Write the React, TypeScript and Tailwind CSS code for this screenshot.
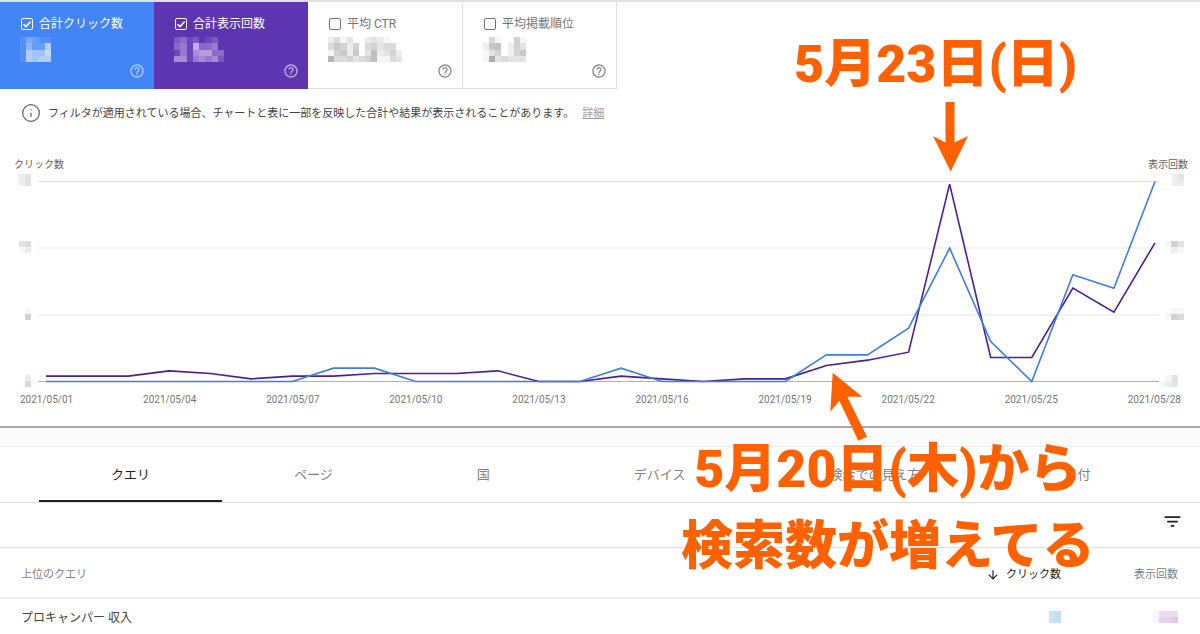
import React, { useState } from 'react';
import { Info } from 'lucide-react';
import { MdArrowDownward, MdFilterList, MdHelpOutline } from 'react-icons/md';

interface MosaicProps {
  rows: string[];
  color: string;
  strength: number;
  label: string;
}

// Pixelated block that hides a number: each digit is the opacity of one cell
const Mosaic: React.FC<MosaicProps> = ({ rows, color, strength, label }) => (
  <svg
    role="img"
    aria-label={label}
    className="block shrink-0"
    width={Math.round(rows[0].length * 6.2)}
    height={Math.round(rows.length * 6.2)}
    viewBox={`0 0 ${rows[0].length} ${rows.length}`}
    preserveAspectRatio="none"
    shapeRendering="crispEdges"
  >
    {rows.map((row, y) =>
      row.split('').map((cell, x) => (
        <rect key={`${x}-${y}`} x={x} y={y} width={1} height={1} fill={color} fillOpacity={Number(cell) * strength} />
      ))
    )}
  </svg>
);

interface Metric {
  id: string;
  title: string;
  card: string;
  box: string;
  help: string;
  color: string;
  strength: number;
  rows: string[];
}

const metrics: Metric[] = [
  {
    id: 'clicks',
    title: '合計クリック数',
    card: 'w-[154px] bg-[#4285f4] text-white',
    box: 'border-white',
    help: 'text-white/60',
    color: '#fff',
    strength: 0.1,
    rows: ['132110', '142260', '165570', '165660'],
  },
  {
    id: 'impressions',
    title: '合計表示回数',
    card: 'w-[154px] bg-[#5e35b1] text-white',
    box: 'border-white',
    help: 'text-white/60',
    color: '#f3e0ff',
    strength: 0.1,
    rows: ['23120120', '34173340', '14156633', '55145452'],
  },
  {
    id: 'ctr',
    title: '平均 CTR',
    card: 'w-[155px] border-r border-b border-[#e0e0e0] text-[#757575]',
    box: 'border-[#757575]',
    help: 'text-[#8a8a8a]',
    color: '#000',
    strength: 0.035,
    rows: ['241300232100', '465250453440', '156260372352', '844534571143'],
  },
  {
    id: 'position',
    title: '平均掲載順位',
    card: 'w-[154px] border-r border-b border-[#e0e0e0] text-[#757575]',
    box: 'border-[#757575]',
    help: 'text-[#8a8a8a]',
    color: '#000',
    strength: 0.035,
    rows: ['0410051', '2670253', '1350256', '1934333'],
  },
];

const clicks = [0, 0, 0, 0, 0, 0, 0, 1, 1, 0, 0, 0, 0, 0, 1, 0, 0, 0, 0, 2, 2, 4, 10, 3, 0, 8, 7, 15];
const impressions = [2, 2, 2, 4, 3, 1, 2, 2, 3, 3, 3, 4, 0, 0, 2, 1, 0, 1, 1, 6, 8, 11, 74, 9, 9, 35, 26, 52];

const dates = [
  '2021/05/01', '2021/05/04', '2021/05/07', '2021/05/10', '2021/05/13',
  '2021/05/16', '2021/05/19', '2021/05/22', '2021/05/25', '2021/05/28',
];

const leftAxis = [['23', '23'], ['34', '12'], ['1', '5'], ['2', '4']];
const rightAxis = [['23', '22'], ['153', '021'], ['011', '154'], ['0130', '1230']];

const tabs = ['クエリ', 'ページ', '国', 'デバイス', '検索での見え方', '日付'];

const toPoints = (values: number[], max: number) =>
  values.map((v, i) => `${8 + (i * 1109) / (values.length - 1)},${200.5 - (v / max) * 200}`).join(' ');

const MetricCard: React.FC<{ metric: Metric }> = ({ metric }) => {
  const [checked, setChecked] = useState(metric.id === 'clicks' || metric.id === 'impressions');

  return (
    <div className={`flex h-[87px] flex-col pt-3 pl-5 pr-[9px] ${metric.card}`}>
      <label htmlFor={metric.id} className="flex h-[18px] items-center gap-1.5 pt-px pl-px text-[12px] leading-4 whitespace-nowrap">
        <span className="grid shrink-0">
          <input
            id={metric.id}
            type="checkbox"
            checked={checked}
            onChange={(e) => setChecked(e.target.checked)}
            className={`col-start-1 row-start-1 size-3 appearance-none rounded-[2px] border ${metric.box}`}
          />
          {checked && (
            <svg className="pointer-events-none col-start-1 row-start-1 size-3" viewBox="0 0 12 12" fill="none" stroke="currentColor" strokeWidth={1.5}>
              <path d="M2.5 6.2 5 8.6 9.6 3.6" />
            </svg>
          )}
        </span>
        {metric.title}
      </label>
      <div className="mt-[5px]">
        <Mosaic rows={metric.rows} color={metric.color} strength={metric.strength} label={metric.title} />
      </div>
      <button aria-label="ヘルプ" className={`mt-px self-end ${metric.help}`}>
        <MdHelpOutline size={16} />
      </button>
    </div>
  );
};

const Chart: React.FC = () => (
  <div>
    <div className="flex justify-between pl-[14px] pr-3 text-[10px] leading-4 text-[#616161]">
      <span>クリック数</span>
      <span>表示回数</span>
    </div>
    <div className="mt-px flex h-[213px]">
      <div className="flex w-[38px] flex-col items-end justify-between pr-[7px]">
        {leftAxis.map((rows, i) => (
          <Mosaic key={i} rows={rows} color="#000" strength={0.035} label="クリック数の目盛り" />
        ))}
      </div>
      <svg className="mt-[7px] block h-[200px] min-w-0 flex-1 overflow-visible" viewBox="0 0 1121 200" preserveAspectRatio="none" fill="none">
        <path d="M0 0.5H1121" stroke="#e0e0e0" />
        <path d="M0 67H1121M0 134H1121" stroke="#f0f0f0" strokeWidth={1.5} />
        <path d="M0 200.5H1121" stroke="#b0b0b0" />
        <polyline points={toPoints(impressions, 75)} stroke="#4a1f96" strokeWidth={1.6} />
        <polyline points={toPoints(clicks, 15)} stroke="#3f7edb" strokeWidth={1.6} />
      </svg>
      <div className="flex w-[41px] flex-col items-end justify-between pr-4">
        {rightAxis.map((rows, i) => (
          <Mosaic key={i} rows={rows} color="#000" strength={0.035} label="表示回数の目盛り" />
        ))}
      </div>
    </div>
    <div className="mt-[5px] flex justify-between pl-5 pr-[19px] font-[Roboto,sans-serif] text-[10px] leading-4 text-[#757575]">
      {dates.map((date) => (
        <span key={date}>{date}</span>
      ))}
    </div>
  </div>
);

const Annotations: React.FC = () => (
  <div className="pointer-events-none absolute inset-0 text-[52px] leading-[77px] font-black whitespace-nowrap text-[#ff6000]">
    <p className="absolute top-[26px] left-[794px]">5月23日(日)</p>
    <svg className="absolute top-[102px] left-[933px]" width="35" height="70" viewBox="0 0 35 70" fill="currentColor">
      <path d="M12.5 0H21.5V40.5L35 34 17.6 69.5 0 34 12.5 40.5Z" />
    </svg>
    <svg className="absolute top-[372px] left-[830px]" width="38" height="70" viewBox="0 0 38 70" fill="currentColor">
      <path d="M2.7 0.7 32.3 24.7H17.3L37 64.7 28.3 68.7 9.3 28.7 0.3 39.7Z" />
    </svg>
    <p className="absolute top-[431px] left-[681px] text-center">
      5月20日(木)から
      <br />
      検索数が増えてる
    </p>
  </div>
);

export default function App() {
  const [active, setActive] = useState('クエリ');

  return (
    <div className="relative min-h-screen overflow-hidden bg-[#fafafa] font-[Roboto,'Noto_Sans_CJK_JP',sans-serif] text-[#424242]">
      <section className="border-t-2 border-b-2 border-t-[#e0e0e0] border-b-[#a8a8a8] bg-white pb-[18px]">
        <div className="flex">
          {metrics.map((metric) => (
            <MetricCard key={metric.id} metric={metric} />
          ))}
        </div>
        <div className="flex h-12 items-center pl-[21px] text-[11px] leading-4">
          <Info size={20} strokeWidth={1.5} className="mr-[7px] shrink-0 text-[#616161]" />
          <p className="pt-0.5">
            フィルタが適用されている場合、チャートと表に一部を反映した合計や結果が表示されることがあります。
            <a href="#details" className="ml-2 text-[#9e9e9e] underline">詳細</a>
          </p>
        </div>
        <div className="mt-5">
          <Chart />
        </div>
      </section>

      <section className="mt-[18px] border-t border-[#ececec] bg-white">
        <div role="tablist" className="flex h-14 border-b border-[#e0e0e0] pl-[39px] text-[13px] whitespace-nowrap">
          {tabs.map((tab) => (
            <button
              key={tab}
              role="tab"
              aria-selected={tab === active}
              onClick={() => setActive(tab)}
              className={`border-b-2 px-[72px] pt-0.5 ${tab === active ? 'border-[#212121] text-[#212121]' : 'border-transparent text-[#808080]'}`}
            >
              {tab}
            </button>
          ))}
        </div>
        <div className="flex h-[45px] items-start justify-end border-b border-[#e0e0e0] pt-2 pr-[17px]">
          <button aria-label="フィルタ" className="text-[#212121]">
            <MdFilterList size={21} />
          </button>
        </div>
        <table className="w-full table-fixed border-collapse">
          <thead>
            <tr className="h-[50px] border-b-2 border-[#ebebeb] text-[11px] leading-4 text-[#808080]">
              <th className="pt-1 pl-[21px] text-left font-normal">上位のクエリ</th>
              <th className="w-[120px] pt-1 font-normal">
                <button className="ml-auto flex items-center gap-1.5 text-[#212121]">
                  <MdArrowDownward size={14} />
                  クリック数
                </button>
              </th>
              <th className="w-[139px] pt-1 pr-[22px] text-right font-normal">表示回数</th>
            </tr>
          </thead>
          <tbody>
            <tr className="h-9 text-[12px]">
              <td className="pt-0.5 pl-[21px]">プロキャンパー 収入</td>
              <td>
                <div className="flex justify-end">
                  <Mosaic rows={['56', '56']} color="#7ab8d8" strength={0.08} label="クリック数" />
                </div>
              </td>
              <td className="pr-[22px]">
                <div className="flex justify-end">
                  <Mosaic rows={['1444', '1556']} color="#a868b8" strength={0.06} label="表示回数" />
                </div>
              </td>
            </tr>
          </tbody>
        </table>
      </section>

      <Annotations />
    </div>
  );
}
